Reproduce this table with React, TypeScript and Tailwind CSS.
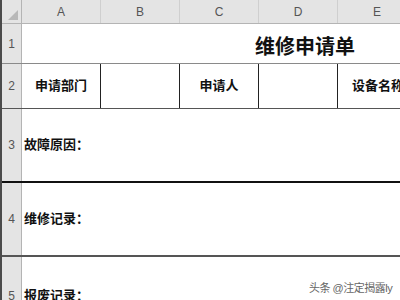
const font = { fontFamily: '"Liberation Sans", "Noto Sans CJK SC", sans-serif' };

const cols = ["A", "B", "C", "D", "E"];

function RowHead({ n, className = "" }: { n: number; className?: string }) {
  return (
    <div className={`w-[20px] shrink-0 flex items-center justify-center bg-[#e4e4e4] border-r border-[#b4b4b4] text-[12px] text-[#555] ${className}`}>
      {n}
    </div>
  );
}

export default function App() {
  return (
    <div className="w-[400px] h-[300px] overflow-hidden bg-white flex relative" style={font}>
      {/* dark left strip */}
      <div className="w-[2px] shrink-0 bg-[#4b4b4b]" />
      <div className="flex-1 flex flex-col min-w-0">
        {/* column header */}
        <div className="h-[24px] shrink-0 flex bg-[#e4e4e4] border-b border-[#b4b4b4]">
          <div className="w-[20px] shrink-0 border-r border-[#b4b4b4] flex items-end justify-end p-[3px]">
            <svg width="10" height="10" viewBox="0 0 10 10">
              <polygon points="10,0 10,10 0,10" fill="#b8b8b8" />
            </svg>
          </div>
          {cols.map((c) => (
            <div key={c} className="w-[79px] shrink-0 border-r border-[#cfcfcf] flex items-center justify-center text-[12px] text-[#555]">
              {c}
            </div>
          ))}
        </div>

        {/* row 1 - title */}
        <div className="h-[40px] shrink-0 flex border-b border-[#8a8a8a]">
          <RowHead n={1} />
          <div className="flex-1 relative">
            <span className="absolute left-[233px] top-[8px] text-[20px] font-bold text-[#111]">维修申请单</span>
          </div>
        </div>

        {/* row 2 */}
        <div className="h-[45px] shrink-0 flex border-b border-[#555]">
          <RowHead n={2} />
          <div className="w-[79px] shrink-0 border-r border-[#222] flex items-center justify-center text-[13px] font-bold text-[#111]">申请部门</div>
          <div className="w-[79px] shrink-0 border-r border-[#222]" />
          <div className="w-[79px] shrink-0 border-r border-[#222] flex items-center justify-center text-[13px] font-bold text-[#111]">申请人</div>
          <div className="w-[79px] shrink-0 border-r border-[#222]" />
          <div className="w-[79px] shrink-0 flex items-center pl-[14px] text-[13px] font-bold text-[#111] whitespace-nowrap">设备名称</div>
        </div>

        {/* row 3 */}
        <div className="h-[74px] shrink-0 flex border-b-2 border-[#111]">
          <RowHead n={3} />
          <div className="flex-1 flex items-center pl-[2px] text-[13px] font-bold text-[#111]">故障原因：</div>
        </div>

        {/* row 4 */}
        <div className="h-[74px] shrink-0 flex border-b-2 border-[#555]">
          <RowHead n={4} />
          <div className="flex-1 flex items-center pl-[2px] text-[13px] font-bold text-[#111]">维修记录：</div>
        </div>

        {/* row 5 */}
        <div className="flex-1 flex">
          <RowHead n={5} className="items-start pt-[30px]" />
          <div className="flex-1 pt-[29px] pl-[2px] text-[13px] font-bold text-[#111]">报废记录：</div>
        </div>
      </div>

      {/* watermark */}
      <div className="absolute left-[309px] top-[280px] text-[11px] tracking-[-0.5px] text-[#666] whitespace-nowrap">头条 @注定揭露ly</div>
    </div>
  );
}
